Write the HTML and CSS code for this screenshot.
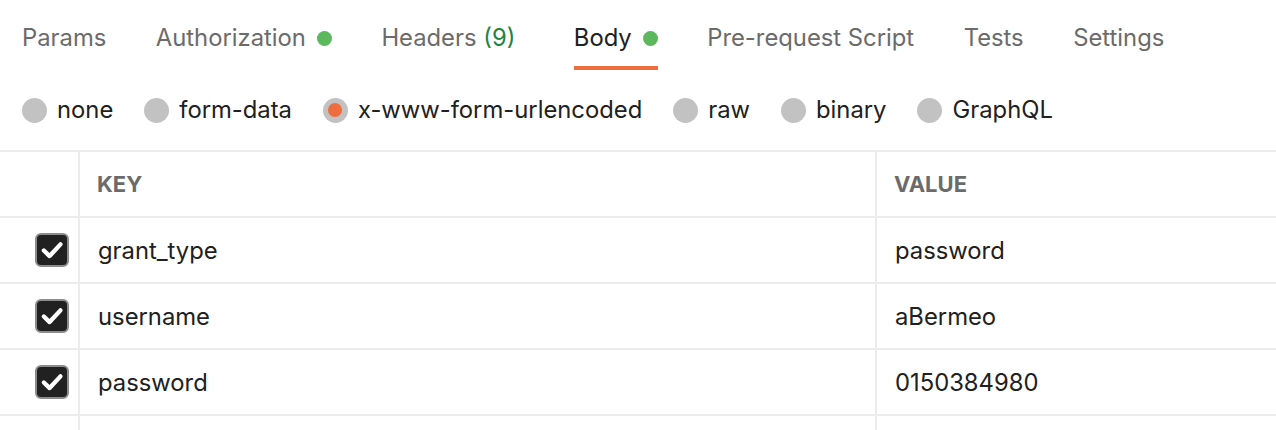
FILE: index.html
```html
<!DOCTYPE html>
<html>
<head>
<meta charset="utf-8">
<link rel="stylesheet" href="styles.css">
</head>
<body>
<div class="tabs">
  <div class="tab">Params</div>
  <div class="tab">Authorization<span class="dot"></span></div>
  <div class="tab">Headers <span class="count">(9)</span></div>
  <div class="tab active">Body<span class="dot"></span></div>
  <div class="tab">Pre-request Script</div>
  <div class="tab">Tests</div>
  <div class="tab">Settings</div>
</div>
<div class="radios">
  <label class="radio"><span class="circle"></span>none</label>
  <label class="radio"><span class="circle"></span>form-data</label>
  <label class="radio"><span class="circle checked"></span>x-www-form-urlencoded</label>
  <label class="radio"><span class="circle"></span>raw</label>
  <label class="radio"><span class="circle"></span>binary</label>
  <label class="radio"><span class="circle"></span>GraphQL</label>
</div>
<div class="table">
  <div class="row head">
    <div class="cell chk"></div>
    <div class="cell key">KEY</div>
    <div class="cell val">VALUE</div>
  </div>
  <div class="row">
    <div class="cell chk"><span class="box"><svg width="26" height="26" viewBox="0 0 24 24"><path d="M4.5 12.5 L9.8 17.6 L19.8 6.8" fill="none" stroke="#fff" stroke-width="4" stroke-linecap="round" stroke-linejoin="round"/></svg></span></div>
    <div class="cell key">grant_type</div>
    <div class="cell val">password</div>
  </div>
  <div class="row">
    <div class="cell chk"><span class="box"><svg width="26" height="26" viewBox="0 0 24 24"><path d="M4.5 12.5 L9.8 17.6 L19.8 6.8" fill="none" stroke="#fff" stroke-width="4" stroke-linecap="round" stroke-linejoin="round"/></svg></span></div>
    <div class="cell key">username</div>
    <div class="cell val">aBermeo</div>
  </div>
  <div class="row">
    <div class="cell chk"><span class="box"><svg width="26" height="26" viewBox="0 0 24 24"><path d="M4.5 12.5 L9.8 17.6 L19.8 6.8" fill="none" stroke="#fff" stroke-width="4" stroke-linecap="round" stroke-linejoin="round"/></svg></span></div>
    <div class="cell key">password</div>
    <div class="cell val">0150384980</div>
  </div>
  <div class="row">
    <div class="cell chk"></div>
    <div class="cell key"></div>
    <div class="cell val"></div>
  </div>
</div>
</body>
</html>
```
FILE: styles.css
```css
html, body {
  margin: 0;
  padding: 0;
  background: #fff;
  overflow: hidden;
}
body {
  font-family: Inter, "Noto Sans", sans-serif;
  font-size: 23.8px;
  color: #212121;
}
.tabs {
  display: flex;
  gap: 49.5px;
  padding: 0 22px;
}
.tab {
  display: flex;
  align-items: center;
  line-height: 28px;
  padding: 24px 0 14px;
  border-bottom: 4px solid transparent;
  color: #6b6b6b;
  white-space: pre;
}
.tab.active {
  color: #212121;
  border-bottom-color: #ef6c3f;
}
.count {
  color: #26833a;
  margin-right: 9px;
}
.dot {
  width: 15px;
  height: 15px;
  border-radius: 50%;
  background: #5cb85c;
  margin-left: 11px;
}
.radios {
  display: flex;
  gap: 31px;
  padding: 26px 22px 26px;
  line-height: 28px;
}
.radio {
  display: flex;
  align-items: center;
  gap: 10px;
}
.circle {
  width: 25px;
  height: 25px;
  border-radius: 50%;
  background: #c2c2c2;
  display: flex;
  align-items: center;
  justify-content: center;
}
.circle.checked::after {
  content: "";
  width: 14px;
  height: 14px;
  border-radius: 50%;
  background: #ef6c3f;
}
.table {
  border-top: 2px solid #ececec;
}
.row {
  display: flex;
  height: 64px;
  border-bottom: 2px solid #ececec;
}
.cell {
  display: flex;
  align-items: center;
  box-sizing: border-box;
}
.chk {
  width: 80px;
  border-right: 2px solid #ececec;
  justify-content: flex-end;
  padding-right: 9px;
}
.key {
  width: 797px;
  border-right: 2px solid #ececec;
  padding-left: 18px;
}
.val {
  flex: 1;
  padding-left: 18px;
}
.head .cell {
  font-weight: 700;
  color: #6b6b6b;
  font-size: 22px;
}
.head .key, .head .val {
  padding-left: 17px;
}
.box {
  width: 34px;
  height: 34px;
  box-sizing: border-box;
  border: 2px solid #8c8c8c;
  border-radius: 6px;
  background: #212121;
  display: flex;
  align-items: center;
  justify-content: center;
}
```
